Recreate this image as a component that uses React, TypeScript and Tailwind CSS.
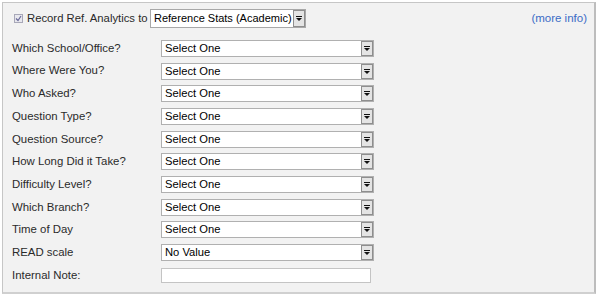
import React from "react";

function Arrow() {
  return (
    <span className="flex h-full w-[12px] shrink-0 items-center justify-center border border-[#8e8e8e] bg-[#e4e4e4]">
      <svg width="6" height="5" viewBox="0 0 6 5">
        <rect x="0" y="0" width="6" height="1" fill="#111" />
        <path d="M0 2 L6 2 L3 5 Z" fill="#111" />
      </svg>
    </span>
  );
}

function FakeSelect({ value }: { value: string }) {
  return (
    <div className="flex h-[17px] w-[213px] items-stretch border border-[#b0b0b0] bg-white">
      <span className="flex-1 whitespace-nowrap pl-[3px] text-[11.2px] leading-[15px] text-black">
        {value}
      </span>
      <Arrow />
    </div>
  );
}

const rows: [string, string][] = [
  ["Which School/Office?", "Select One"],
  ["Where Were You?", "Select One"],
  ["Who Asked?", "Select One"],
  ["Question Type?", "Select One"],
  ["Question Source?", "Select One"],
  ["How Long Did it Take?", "Select One"],
  ["Difficulty Level?", "Select One"],
  ["Which Branch?", "Select One"],
  ["Time of Day", "Select One"],
  ["READ scale", "No Value"],
];

export default function App() {
  return (
    <div
      className="h-[304px] w-[600px] bg-white pl-[2px] pt-[2px]"
      style={{ fontFamily: '"Liberation Sans", Arial, sans-serif' }}
    >
      <div className="h-[292px] w-[594px] border border-r-2 border-b-2 border-[#c6c6c6] border-r-[#bdbdbd] border-b-[#d0d0d0] bg-[#f2f2f2] pl-[9px] pr-[7px]">
        <div className="flex h-[34px] items-center pb-[3px]">
          <span className="ml-[2px] flex h-[9px] w-[9px] shrink-0 items-center justify-center border border-[#a8a8b8] bg-[#e8e8ee]">
            <svg width="7" height="7" viewBox="0 0 7 7">
              <path d="M1 3.5 L3 5.5 L6 1" stroke="#6a6a9a" strokeWidth="1.2" fill="none" />
            </svg>
          </span>
          <span className="ml-[4px] w-[123px] whitespace-nowrap text-[11.3px] text-[#2a2a2a]">
            Record Ref. Analytics to
          </span>
          <div className="flex h-[19px] w-[156px] items-stretch border border-[#a8a8a8] bg-white">
            <span className="flex-1 whitespace-nowrap pl-[3px] text-[11px] leading-[17px] text-black">
              Reference Stats (Academic)
            </span>
            <Arrow />
          </div>
          <span className="ml-auto text-[11.5px] text-[#3b6cc6]">(more info)</span>
        </div>
        {rows.map(([label, value]) => (
          <div key={label} className="flex h-[22.7px] items-center">
            <span className="w-[149px] whitespace-nowrap text-[11.4px] text-[#2a2a2a]">{label}</span>
            <FakeSelect value={value} />
          </div>
        ))}
        <div className="flex h-[22.7px] items-center">
          <span className="w-[149px] whitespace-nowrap text-[11.4px] text-[#2a2a2a]">Internal Note:</span>
          <div className="h-[15px] w-[210px] border border-[#c4c4c4] bg-white" />
        </div>
      </div>
    </div>
  );
}
